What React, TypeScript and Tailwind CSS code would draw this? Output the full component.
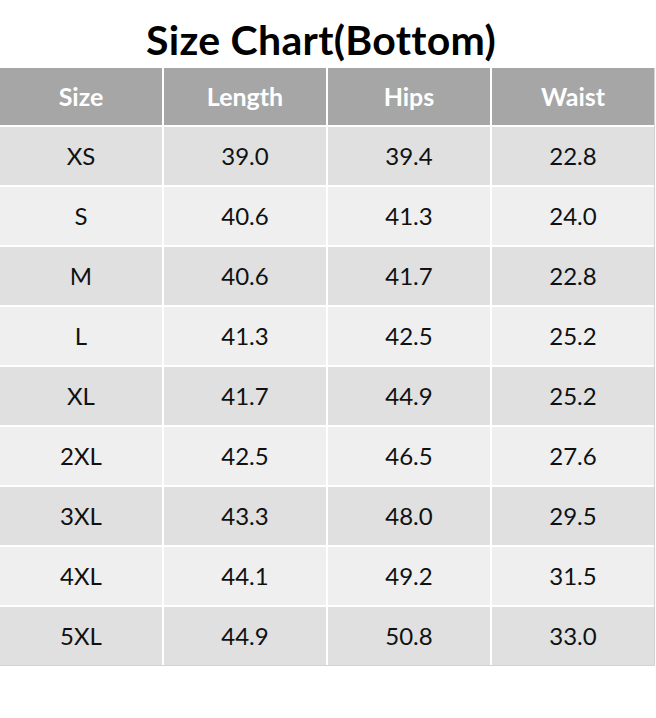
import React from "react";

const rows = [
  ["XS", "39.0", "39.4", "22.8"],
  ["S", "40.6", "41.3", "24.0"],
  ["M", "40.6", "41.7", "22.8"],
  ["L", "41.3", "42.5", "25.2"],
  ["XL", "41.7", "44.9", "25.2"],
  ["2XL", "42.5", "46.5", "27.6"],
  ["3XL", "43.3", "48.0", "29.5"],
  ["4XL", "44.1", "49.2", "31.5"],
  ["5XL", "44.9", "50.8", "33.0"],
];

export default function App() {
  return (
    <div className="w-[656px] h-[718px] bg-white" style={{ fontFamily: "Lato, 'Open Sans', sans-serif" }}>
      <div className="h-[68px] flex items-end justify-center pr-[14px]">
        <h1 className="text-[41px] font-bold text-black leading-none pb-[8px] tracking-[0.3px] [font-variant-ligatures:none]">Size Chart(Bottom)</h1>
      </div>
      <div className="w-[655px] flex flex-col gap-[2px] bg-white border-r border-b border-[#d4d4d4]">
        <div className="grid grid-cols-4 gap-[2px] h-[57px]">
          {["Size", "Length", "Hips", "Waist"].map((h) => (
            <div key={h} className="bg-[#a6a6a6] flex items-center justify-center text-white font-bold text-[25px]">
              {h}
            </div>
          ))}
        </div>
        {rows.map((r, i) => (
          <div key={r[0]} className="grid grid-cols-4 gap-[2px] h-[58px]">
            {r.map((c, j) => (
              <div
                key={j}
                className={`${i % 2 === 0 ? "bg-[#e0e0e0]" : "bg-[#efefef]"} flex items-center justify-center text-[#111111] text-[24px]`}
              >
                {c}
              </div>
            ))}
          </div>
        ))}
      </div>
    </div>
  );
}
